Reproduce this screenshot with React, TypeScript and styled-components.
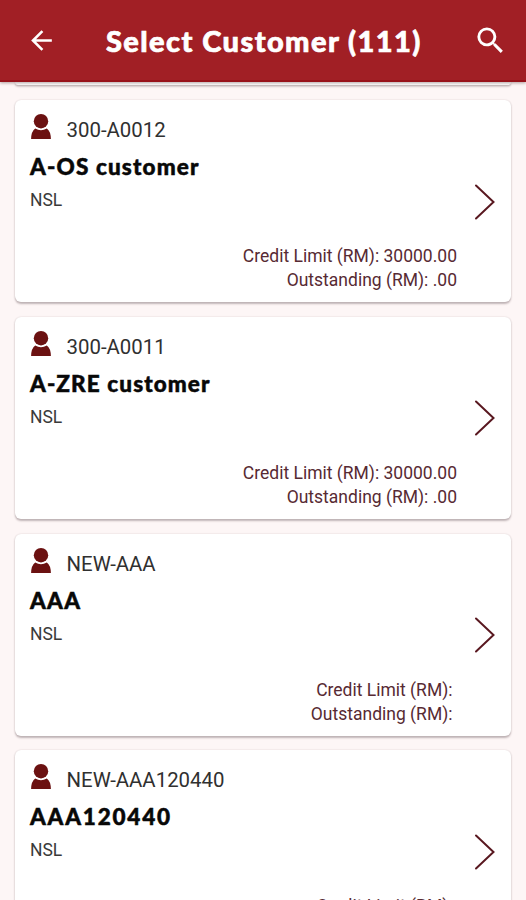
import React from "react";
import styled, { createGlobalStyle } from "styled-components";

const GlobalStyle = createGlobalStyle`
  * { box-sizing: border-box; }
  body { margin: 0; background: #fdf6f6; overflow: hidden; }
`;

const Screen = styled.div`
  height: 900px;
  display: flex;
  flex-direction: column;
  overflow: hidden;
  background: #fdf6f6;
  font-family: Roboto, "Liberation Sans", sans-serif;
`;

const Header = styled.header`
  flex: none;
  z-index: 1;
  height: 82px;
  padding: 0 18px 0 26px;
  display: flex;
  align-items: center;
  background: #a11f25;
  border-bottom: 2px solid #98121a;
  box-shadow: 0 1px 3px rgba(60, 20, 20, 0.4);
  color: #fff;
`;

const IconButton = styled.button`
  flex: none;
  padding: 0;
  border: 0;
  background: none;
  color: inherit;
  display: flex;
  svg { display: block; }
`;

const Title = styled.h1`
  flex: 1;
  margin: 2px 0 0 49px;
  font: 900 29px/40px Lato, sans-serif;
  letter-spacing: 1.42px;
  -webkit-text-stroke: 0.7px currentColor;
  white-space: nowrap;
`;

const List = styled.main`
  flex: 1;
  min-height: 0;
  overflow: hidden;
  padding: 0 15px;
  display: flex;
  flex-direction: column;
  gap: 14.75px;
`;

const Surface = styled.article`
  flex: none;
  background: #fff;
  border-radius: 6px;
  box-shadow: 0 1.5px 2px rgba(70, 50, 55, 0.32), 0 0 2px rgba(70, 50, 55, 0.12);
`;

const ScrolledCard = styled(Surface)`
  height: 3.25px;
  border-radius: 0 0 6px 6px;
`;

const Card = styled(Surface)`
  height: 202px;
  padding: 12px 15px 10px 15px;
  display: grid;
  grid-template-columns: 1fr 22px;
  column-gap: 17px;
  align-items: center;
  > svg { margin-top: -1px; }
`;

const Details = styled.div`
  height: 180px;
  display: flex;
  flex-direction: column;
`;

const CodeRow = styled.div`
  height: 36px;
  display: flex;
  align-items: center;
  gap: 14.5px;
  svg { flex: none; margin-bottom: 6px; }
`;

const Code = styled.span`
  font-size: 20.4px;
  line-height: 24px;
  color: #303030;
`;

const Name = styled.h2<{ $tracking: number }>`
  margin: 0;
  padding-top: 1px;
  font: 900 22.5px/35px Lato, sans-serif;
  letter-spacing: ${(p) => p.$tracking}px;
  -webkit-text-stroke: 0.5px currentColor;
  color: #080808;
`;

const Branch = styled.div`
  font-size: 17.5px;
  line-height: 33px;
  color: #3a3a3a;
`;

const Balances = styled.div<{ $blank: boolean }>`
  margin-top: auto;
  padding-right: ${(p) => (p.$blank ? 4.5 : 0)}px;
  text-align: right;
  font-size: 17.5px;
  line-height: 24px;
  color: #572a33;
`;

const PersonIcon = () => (
  <svg width="22" height="26" viewBox="0 0 22 26" fill="#6b1111">
    <circle cx="11" cy="7.2" r="7.2" />
    <path d="M5.2 14.4Q11 18 16.8 14.4Q20.8 17.2 20.9 25H1.1Q1.2 17.2 5.2 14.4Z" />
  </svg>
);

const Chevron = () => (
  <svg width="22" height="36" viewBox="0 0 22 36" fill="none" stroke="#591820" strokeWidth="2" strokeLinecap="round">
    <path d="M2 1.5L19.5 18L2 34.5" />
  </svg>
);

const customers = [
  { code: "300-A0012", name: "A-OS customer", limit: "30000.00", due: ".00", tracking: 1.15 },
  { code: "300-A0011", name: "A-ZRE customer", limit: "30000.00", due: ".00", tracking: 1.1 },
  { code: "NEW-AAA", name: "AAA", limit: "", due: "", tracking: 1.3 },
  { code: "NEW-AAA120440", name: "AAA120440", limit: "", due: "", tracking: 1.8 },
];

export default function App() {
  return (
    <Screen>
      <GlobalStyle />
      <Header>
        <IconButton aria-label="Back">
          <svg width="31" height="31" viewBox="0 0 24 24" fill="currentColor">
            <path d="M20 11H7.83l5.59-5.59L12 4l-8 8 8 8 1.41-1.41L7.83 13H20v-2z" />
          </svg>
        </IconButton>
        <Title>Select Customer (111)</Title>
        <IconButton aria-label="Search">
          <svg width="35" height="35" viewBox="0 0 24 24" fill="currentColor">
            <path d="M15.5 14h-.79l-.28-.27A6.471 6.471 0 0 0 16 9.5 6.5 6.5 0 1 0 9.5 16c1.61 0 3.09-.59 4.23-1.57l.27.28v.79l5 4.99L20.49 19l-4.99-5zm-6 0C7.01 14 5 11.99 5 9.5S7.01 5 9.5 5 14 7.01 14 9.5 11.99 14 9.5 14z" />
          </svg>
        </IconButton>
      </Header>
      <List>
        <ScrolledCard />
        {customers.map((c) => (
          <Card key={c.code}>
            <Details>
              <CodeRow>
                <PersonIcon />
                <Code>{c.code}</Code>
              </CodeRow>
              <Name $tracking={c.tracking}>{c.name}</Name>
              <Branch>NSL</Branch>
              <Balances $blank={!c.limit}>
                <div>Credit Limit (RM): {c.limit}</div>
                <div>Outstanding (RM): {c.due}</div>
              </Balances>
            </Details>
            <Chevron />
          </Card>
        ))}
      </List>
    </Screen>
  );
}
